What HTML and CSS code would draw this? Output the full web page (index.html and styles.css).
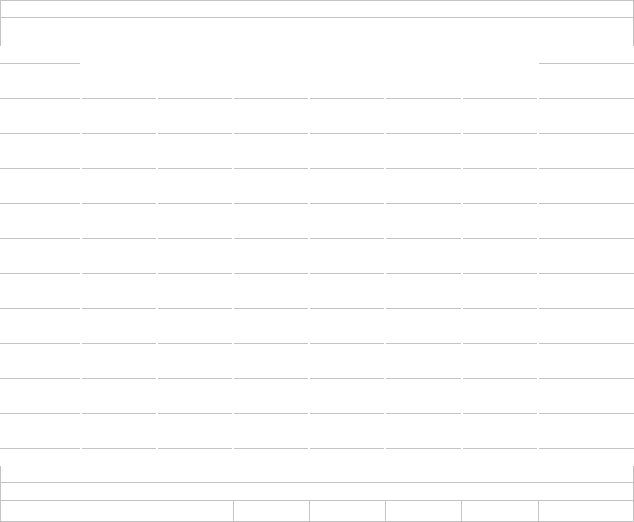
FILE: index.html
```html
<!DOCTYPE html>
<html lang="en">
<head>
<meta charset="utf-8">
<title>Table</title>
<link rel="stylesheet" href="styles.css">
</head>
<body>
<div class="sheet">
  <div class="top">
    <div class="top-title"></div>
  </div>
  <div class="grid head">
    <div class="cell line"></div>
    <div class="cell"></div>
    <div class="cell"></div>
    <div class="cell"></div>
    <div class="cell"></div>
    <div class="cell"></div>
    <div class="cell"></div>
    <div class="cell line"></div>
  </div>
  <div class="body" id="body"></div>
  <div class="foot">
    <div class="foot-title"></div>
    <div class="foot-cells">
      <div class="fcell first"></div>
      <div class="fcell"></div>
      <div class="fcell"></div>
      <div class="fcell"></div>
      <div class="fcell"></div>
      <div class="fcell"></div>
    </div>
  </div>
</div>
<script>
  var body = document.getElementById('body');
  for (var r = 0; r < 11; r++) {
    var row = document.createElement('div');
    row.className = 'grid row';
    for (var c = 0; c < 8; c++) {
      var cell = document.createElement('div');
      cell.className = 'cell line';
      row.appendChild(cell);
    }
    body.appendChild(row);
  }
</script>
</body>
</html>
```
FILE: styles.css
```css
html, body {
  margin: 0;
  padding: 0;
  background: #ffffff;
  overflow: hidden;
  font-family: "Liberation Sans", Arial, sans-serif;
}

.sheet {
  width: 634px;
  height: 522px;
  display: flex;
  flex-direction: column;
}

.top {
  box-sizing: border-box;
  height: 46px;
  border: 1px solid #c4c4c4;
  border-bottom: none;
}

.top-title {
  height: 16px;
  border-bottom: 1px solid #c4c4c4;
}

.grid {
  display: grid;
  grid-template-columns: 80px 74px 74px 74px 74px 75px 74px 95px;
  column-gap: 2px;
}

.cell {
  box-sizing: border-box;
}

.line {
  border-bottom: 1px solid #c4c4c4;
}

.head {
  height: 18px;
}

.row {
  height: 35px;
}

.body {
  display: flex;
  flex-direction: column;
}

.foot {
  margin-top: 17px;
  flex: 1;
  box-sizing: border-box;
  border-left: 1px solid #c4c4c4;
  border-right: 1px solid #c4c4c4;
  display: flex;
  flex-direction: column;
}

.foot-title {
  height: 16px;
  border-bottom: 1px solid #c4c4c4;
  margin-bottom: 17px;
}

.foot-cells {
  display: grid;
  grid-template-columns: 234px 76px 76px 76px 77px 95px;
  margin-left: -1px;
  margin-right: -1px;
}

.fcell {
  box-sizing: border-box;
  height: 22px;
  border-top: 1px solid #c4c4c4;
  border-bottom: 1px solid #c4c4c4;
  border-right: 1px solid #c4c4c4;
}

.fcell.first {
  border-left: 1px solid #c4c4c4;
}
```
